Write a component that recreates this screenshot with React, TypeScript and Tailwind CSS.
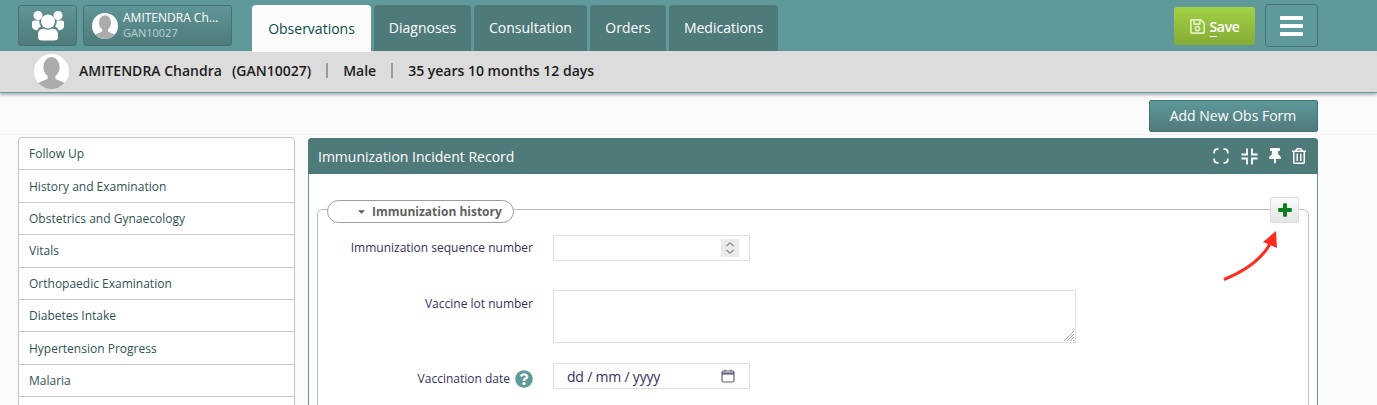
import React from "react";
import { FaRegSave, FaThumbtack, FaRegTrashAlt, FaQuestionCircle, FaCaretDown } from "react-icons/fa";

function Avatar({ size }: { size: number }) {
  return (
    <svg width={size} height={size} viewBox="0 0 36 36" className="shrink-0">
      <defs>
        <clipPath id={"av" + size}><circle cx="18" cy="18" r="18" /></clipPath>
      </defs>
      <circle cx="18" cy="18" r="18" fill="#ffffff" />
      <g clipPath={"url(#av" + size + ")"} fill="#ababab">
        <ellipse cx="18" cy="13.5" rx="8.4" ry="10.5" />
        <path d="M14 21h8v4.5c3 2 9 3 11 6V36H3v-4.500c2-3 8-4 11-6z" />
      </g>
    </svg>
  );
}

function UsersIcon() {
  return (
    <svg width="32" height="30" viewBox="0 0 32 30" fill="#ffffff">
      <circle cx="6" cy="4.500" r="4.500" />
      <circle cx="26" cy="4.500" r="4.500" />
      <path d="M0 11.500C0 10 1 9.500 2.500 9.500h5c-.5 2 0 4 1.500 6-2 .8-3 2-3.500 4C2 19 0 17.500 0 15.500z" />
      <path d="M32 11.500c0-1.500-1-2-2.500-2h-5c.5 2 0 4-1.500 6 2 .8 3 2 3.500 4 3.500-.5 5.500-2 5.500-4z" />
      <circle cx="16" cy="10.500" r="7" />
      <path d="M8.500 18.500c1.500-1 3-1 4-.5 2 1 5 1 7 0 1-.5 2.500-.5 4 .5 1.500 1 2.500 2.500 2.500 5v3c0 2-1.500 3-3.500 3H9.500c-2 0-3.500-1-3.500-3v-3c0-2.500 1-4 2.500-5z" />
    </svg>
  );
}

function ExpandIcon() {
  return (
    <svg width="16" height="16" viewBox="0 0 16 16" fill="none" stroke="#ffffff" strokeWidth="1.700">
      <path d="M1.200 5.500V4.200c0-1.700 1.300-3 3-3h1.300M10.500 1.200h1.300c1.700 0 3 1.300 3 3v1.300M14.800 10.500v1.300c0 1.700-1.300 3-3 3h-1.300M5.500 14.800H4.200c-1.700 0-3-1.300-3-3v-1.300" />
    </svg>
  );
}

function CompressIcon() {
  return (
    <svg width="17" height="17" viewBox="0 0 17 17" fill="none" stroke="#ffffff" strokeWidth="1.800">
      <path d="M6 0.500V6.500H0.500M11 0.500V6.500H16.500M6 16.500V10.500H0.500M11 16.500V10.500H16.500" />
    </svg>
  );
}

function PlusIcon() {
  return (
    <svg width="14" height="14" viewBox="0 0 14 14" fill="#0a7d1e">
      <path d="M5 1a.8.8 0 0 1 .8-.8h2.400A.8.8 0 0 1 9 1v4h4a.8.8 0 0 1 .8.8v2.400A.8.8 0 0 1 13 9H9v4a.8.8 0 0 1-.8.8H5.800A.8.8 0 0 1 5 13V9H1a.8.8 0 0 1-.8-.8V5.800A.8.8 0 0 1 1 5h4z" />
    </svg>
  );
}

function Stepper() {
  return (
    <svg width="18" height="18" viewBox="0 0 18 18" fill="none" stroke="#8a8a8a" strokeWidth="1.200" className="bg-[#ebebeb]">
      <path d="M5.500 7 9 3.800 12.500 7M5.500 11 9 14.200 12.500 11" />
    </svg>
  );
}

function CalendarIcon() {
  return (
    <svg width="14" height="14" viewBox="0 0 14 14" fill="none" stroke="#62607c" strokeWidth="1.200">
      <rect x="1" y="2" width="12" height="11" rx="1.500" />
      <path d="M1 4.500h12" strokeWidth="2.200" />
      <path d="M4 .5v2M10 .5v2" />
    </svg>
  );
}

function Arrow() {
  return (
    <svg width="64" height="56" viewBox="0 0 64 56" fill="none" className="absolute left-[1221px] top-[229px]">
      <path d="M3 50.500C24 42 40 31 49 15" stroke="#ff2d20" strokeWidth="3" />
      <path d="M55 2 56 19 42 13z" fill="#ff2d20" />
    </svg>
  );
}

const tabs = ["Diagnoses", "Consultation", "Orders", "Medications"];
const tabWidths = ["w-[97px]", "w-[113px]", "w-[76px]", "w-[109px]"];
const forms = [
  "Follow Up",
  "History and Examination",
  "Obstetrics and Gynaecology",
  "Vitals",
  "Orthopaedic Examination",
  "Diabetes Intake",
  "Hypertension Progress",
  "Malaria",
  "",
];

export default function App() {
  return (
    <div className="relative h-[405px] w-[1377px] overflow-hidden bg-[#fafafa] font-['Open_Sans',sans-serif]">
      <header className="flex h-[51px] items-start bg-[#5f9999] pl-[18px] pr-[59px]">
        <button className="mt-[5px] flex h-[41px] w-[59px] items-center justify-center rounded-[3px] border border-[#457373] bg-gradient-to-b from-[#5f9696] to-[#4f7b7b]">
          <UsersIcon />
        </button>
        <button className="ml-[6px] mt-[5px] flex h-[41px] w-[149px] items-center gap-[5px] rounded-[3px] border border-[#457373] bg-gradient-to-b from-[#5f9696] to-[#4f7b7b] pl-[8px]">
          <Avatar size={26} />
          <span className="flex flex-col items-start text-[#ffffff]">
            <span className="text-[12px] leading-[15px] -mt-[1px]">AMITENDRA Ch...</span>
            <span className="text-[11px] leading-[16px] text-[#b9d2d2]">GAN10027</span>
          </span>
        </button>
        <div className="ml-[20px] mt-[5px] flex h-[47px] w-[119px] items-center justify-center rounded-t-[4px] bg-[#fcfcfc] text-[14px] text-[#0d4a4a]">
          Observations
        </div>
        <nav className="ml-[3px] mt-[5px] flex gap-[3px]">
          {tabs.map((t, i) => (
            <div key={t} className={"flex h-[46px] items-center justify-center rounded-t-[4px] bg-[#4f7a7a] pb-[2px] text-[14px] text-[#ffffff] " + tabWidths[i]}>
              {t}
            </div>
          ))}
        </nav>
        <button className="ml-auto mt-[7px] flex h-[38px] w-[81px] items-center justify-center gap-[3px] rounded-[3px] bg-gradient-to-b from-[#a2d145] to-[#86ab35] text-[14px] font-semibold tracking-[-0.3px] text-[#ffffff]">
          <FaRegSave className="text-[17px] text-[#e4f1c4]" />
          <span><span className="underline underline-offset-[4px]">S</span>ave</span>
        </button>
        <button className="ml-[10px] mt-[4px] flex h-[43px] w-[53px] flex-col items-center justify-center gap-[4px] rounded-[3px] border border-[#457373]">
          <span className="h-[4px] w-[23px] rounded-[1px] bg-[#ffffff]" />
          <span className="h-[4px] w-[23px] rounded-[1px] bg-[#ffffff]" />
          <span className="h-[4px] w-[23px] rounded-[1px] bg-[#ffffff]" />
        </button>
      </header>

      <div className="flex h-[42px] items-center border-b-[1.500px] border-[#5f9f9f] bg-[#dcdcdc] pb-[2px] pl-[34px] text-[14px] font-semibold text-[#1c1c1c] shadow-[0_2px_3px_rgba(0,0,0,0.3)]">
        <span className="mt-[2px]"><Avatar size={35} /></span>
        <span className="ml-[10px]">AMITENDRA Chandra</span>
        <span className="ml-[10px]">(GAN10027)</span>
        <span className="ml-[15px] h-[15px] w-[2px] bg-[#9a9a9a]" />
        <span className="ml-[15px]">Male</span>
        <span className="ml-[15px] h-[15px] w-[2px] bg-[#9a9a9a]" />
        <span className="ml-[15px]">35 years 10 months 12 days</span>
      </div>

      <div className="flex h-[42px] items-start justify-end border-b border-[#f1f1f1] pr-[59px] pt-[7px]">
        <button className="flex h-[32px] w-[169px] items-center justify-center rounded-[2px] border border-[#457373] bg-gradient-to-b from-[#5f9999] to-[#4f7a7a] pb-[2px] pr-[1px] text-[14px] font-medium text-[#ffffff]">
          Add New Obs Form
        </button>
      </div>

      <main className="flex items-start gap-[13px] pl-[18px] pr-[59px] pt-[2px]">
        <ul className="w-[277px] shrink-0 rounded-[4px] border border-[#c4c4c4] bg-[#ffffff]">
          {forms.map((f, i) => (
            <li key={i} className="flex h-[32.400px] items-center border-b border-[#c9c9c9] pl-[10px] pt-[1px] text-[12px] text-[#2f5252]">
              {f}
            </li>
          ))}
        </ul>

        <section className="mt-[1px] h-[300px] min-w-0 flex-1 rounded-t-[4px] border-x border-[#5f9999] bg-[#ffffff]">
          <div className="-mx-px flex h-[36px] items-center justify-between rounded-t-[4px] bg-[#4f7a7a] pl-[10px] pr-[11px] text-[14px] text-[#ffffff]">
            <span>Immunization Incident Record</span>
            <span className="flex items-center">
              <ExpandIcon />
              <span className="ml-[12px]"><CompressIcon /></span>
              <FaThumbtack className="ml-[9px] text-[16px]" />
              <FaRegTrashAlt className="ml-[8px] text-[16px]" />
            </span>
          </div>
          <div className="relative mx-[8px] mt-[35px] h-[300px] rounded-[6px] border border-[#bdbdbd] pt-[25px]">
            <div className="absolute left-[9px] top-[-10px] flex h-[23px] w-[187px] items-center rounded-full border border-[#9d9d9d] bg-[#ffffff] pl-[28px] text-[12px] font-bold text-[#5f5f5f]">
              <FaCaretDown className="mr-[5px] text-[11px]" />
              Immunization history
            </div>
            <button className="absolute right-[9px] top-[-13px] flex h-[26px] w-[29px] items-center justify-center rounded-[2px] border border-[#dedede] bg-gradient-to-b from-[#fbfbfb] to-[#e4e4e4]">
              <PlusIcon />
            </button>
            <div className="flex items-center">
              <label className="w-[215px] text-right text-[12px] text-[#35325c]">Immunization sequence number</label>
              <div className="ml-[20px] flex h-[26px] w-[197px] items-center justify-end border border-[#e0e0e0] pr-[10px]">
                <Stepper />
              </div>
            </div>
            <div className="mt-[29px] flex items-start">
              <label className="w-[215px] pt-[5px] text-right text-[12px] text-[#35325c]">Vaccine lot number</label>
              <div className="relative ml-[20px] h-[53px] w-[523px] border border-[#e0e0e0]">
                <svg width="12" height="12" viewBox="0 0 12 12" stroke="#8a8a8a" strokeWidth="0.800" className="absolute bottom-0 right-0">
                  <path d="M11 1 1 11M11 4 4 11M11 7 7 11M11 10 10 11" />
                </svg>
              </div>
            </div>
            <div className="mt-[20px] flex items-start">
              <label className="mt-[7px] flex w-[215px] items-center justify-end gap-[5px] text-[12px] text-[#35325c]">
                Vaccination date
                <FaQuestionCircle className="text-[18px] text-[#5f9999]" />
              </label>
              <div className="ml-[20px] flex h-[26px] w-[197px] items-center justify-between border border-[#e0e0e0] pl-[13px] pr-[14px] text-[14px] tracking-[-0.2px] text-[#35325c]">
                <span>dd / mm / yyyy</span>
                <CalendarIcon />
              </div>
            </div>
          </div>
        </section>
      </main>
      <Arrow />
    </div>
  );
}
